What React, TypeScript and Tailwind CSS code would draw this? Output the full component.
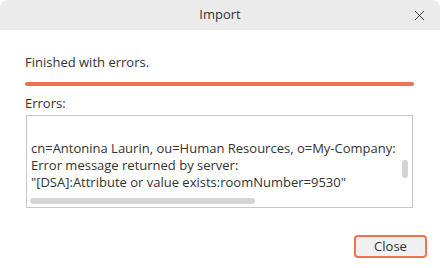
import { X } from "lucide-react";

export default function App() {
  return (
    <div className="w-[440px] h-[268px] bg-white flex flex-col overflow-hidden font-['Open_Sans',sans-serif] text-[#333]">
      {/* Title bar */}
      <div className="h-[30px] bg-[#ebebeb] rounded-t-lg flex items-center justify-center relative">
        <span className="text-[13px] text-[#333]">Import</span>
        <X className="absolute right-[12px] top-[7px] w-[17px] h-[17px] text-[#222]" strokeWidth={1.2} />
      </div>

      <div className="flex flex-col px-[25px] pt-[23px]">
        <div className="text-[13px] leading-[18px]">Finished with errors.</div>
        <div className="mt-[11px] h-[4px] w-[389px] rounded-full bg-[#ee7350]" />
        <div className="mt-[8px] text-[13px] leading-[18px]">Errors:</div>

        {/* Errors box */}
        <div className="mt-[3px] ml-[1px] w-[387px] h-[93px] border border-[#c8c8c8] relative">
          <div className="pl-[4px] pt-[24px] text-[13px] leading-[17px] whitespace-nowrap">
            <div>cn=Antonina Laurin, ou=Human Resources, o=My-Company:</div>
            <div>Error message returned by server:</div>
            <div>"[DSA]:Attribute or value exists:roomNumber=9530"</div>
          </div>
          <div className="absolute left-[3px] top-[82px] w-[225px] h-[6px] rounded-full bg-[#d4d4d4]" />
          <div className="absolute right-[4px] top-[44px] w-[6px] h-[18px] rounded-full bg-[#d4d4d4]" />
        </div>

        <div className="flex justify-end mt-[27px] -mr-[12px]">
          <button className="w-[73px] h-[23px] rounded-[4px] border-2 border-[#ee7350] bg-[#f0f0f0] text-[13px] text-[#333] flex items-center justify-center">
            Close
          </button>
        </div>
      </div>
    </div>
  );
}
